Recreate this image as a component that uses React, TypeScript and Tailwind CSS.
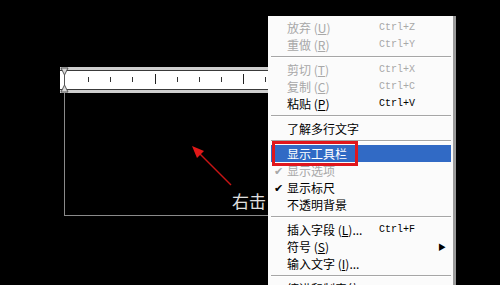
import { Fragment } from 'react'

type Item =
  | { sep: true }
  | {
      sep?: false
      label: string
      key?: string
      tail?: string
      shortcut?: string
      disabled?: boolean
      checked?: boolean
      active?: boolean
      submenu?: boolean
    }

const items: Item[] = [
  { label: '放弃', key: 'U', shortcut: 'Ctrl+Z', disabled: true },
  { label: '重做', key: 'R', shortcut: 'Ctrl+Y', disabled: true },
  { sep: true },
  { label: '剪切', key: 'T', shortcut: 'Ctrl+X', disabled: true },
  { label: '复制', key: 'C', shortcut: 'Ctrl+C', disabled: true },
  { label: '粘贴', key: 'P', shortcut: 'Ctrl+V' },
  { sep: true },
  { label: '了解多行文字' },
  { sep: true },
  { label: '显示工具栏', active: true },
  { label: '显示选项', checked: true, disabled: true },
  { label: '显示标尺', checked: true },
  { label: '不透明背景' },
  { sep: true },
  { label: '插入字段', key: 'L', tail: '...', shortcut: 'Ctrl+F' },
  { label: '符号', key: 'S', submenu: true },
  { label: '输入文字', key: 'I', tail: '...' },
  { sep: true },
  { label: '缩进和制表位...' },
]

// tick x offsets inside the ruler, every ~22px, long tick every 4th
const ticks = [28, 50, 72, 95, 117, 139, 161, 183, 205]

function Ruler() {
  return (
    <div className="relative h-[26px] w-[215px] shrink-0 bg-[#cfcfcf] py-[3px]">
      <div className="flex h-full border-y border-[#3a3a3a] bg-white">
        {ticks.map((x, i) => (
          <div
            key={x}
            className={
              i === 3 || i === 7
                ? 'absolute top-[7px] h-[10px] w-px bg-[#222]'
                : 'absolute top-[10px] h-[5px] w-px bg-[#333]'
            }
            style={{ left: x }}
          />
        ))}
      </div>
      <svg className="absolute left-0 top-0" width="9" height="26" viewBox="0 0 9 26">
        <polygon points="1,1 8,1 4.5,8" fill="#d8d8d8" stroke="#555" strokeWidth="1" />
        <line x1="4.5" y1="8" x2="4.5" y2="18" stroke="#555" />
        <polygon points="1,25 8,25 4.5,18" fill="#d8d8d8" stroke="#555" strokeWidth="1" />
      </svg>
    </div>
  )
}

function Menu() {
  return (
    <div className="absolute left-[268px] top-[16px] w-[188px] border-r-[3px] border-r-[#9a9a9a] bg-[#fbfbfb] pb-1 pl-[3px] pr-[2px] pt-[3px] text-[12px] leading-[17px] [font-family:'Noto_Sans_CJK_SC',sans-serif]">
      {items.map((it, i) => {
        if (it.sep)
          return (
            <div key={i} className="flex h-[8px] items-center">
              <div className="h-[2px] w-full border-y border-t-[#a6a6a6] border-b-white" />
            </div>
          )
        const color = it.active
          ? 'bg-[#316ac5] text-white'
          : it.disabled
            ? 'text-[#a8a8a8]'
            : 'text-black'
        return (
          <div key={i} className={`flex h-[17px] items-center ${color}`}>
            <span className="w-[16px] pl-[3px] text-[11px]">{it.checked ? '✔' : ''}</span>
            <span className="w-[92px] whitespace-nowrap">
              {it.label}
              {it.key && (
                <Fragment>
                  {' '}(<u>{it.key}</u>)
                </Fragment>
              )}
              {it.tail}
            </span>
            <span className="flex-1 whitespace-nowrap text-[10px] [font-family:'Liberation_Mono',monospace]">
              {it.shortcut}
            </span>
            {it.submenu && <span className="mr-[5px] text-[8px]">▶</span>}
          </div>
        )
      })}
    </div>
  )
}

export default function App() {
  return (
    <div className="relative h-[285px] w-[500px] overflow-hidden bg-black">
      {/* mtext editor frame on the drawing canvas */}
      <div className="absolute left-[60px] top-[67px] flex flex-col">
        <Ruler />
        <div className="ml-[4px] flex h-[123px] w-[220px] items-end border-b border-l border-[#8a8a8a] pb-[4px] pl-[167px]">
          <span className="whitespace-nowrap text-[17px] leading-[20px] text-[#e0e0e0] [font-family:'Noto_Sans_CJK_SC',sans-serif]">
            右击
          </span>
        </div>
      </div>
      <svg className="absolute left-0 top-0" width="500" height="285">
        <line x1="231" y1="185" x2="199" y2="153" stroke="#c81414" strokeWidth="1.5" />
        <polygon points="192,146 204,151 197,158" fill="#e01818" />
      </svg>
      <Menu />
      <div className="absolute left-[272px] top-[141px] h-[25px] w-[86px] border-[3px] border-[#e0161c]" />
    </div>
  )
}
